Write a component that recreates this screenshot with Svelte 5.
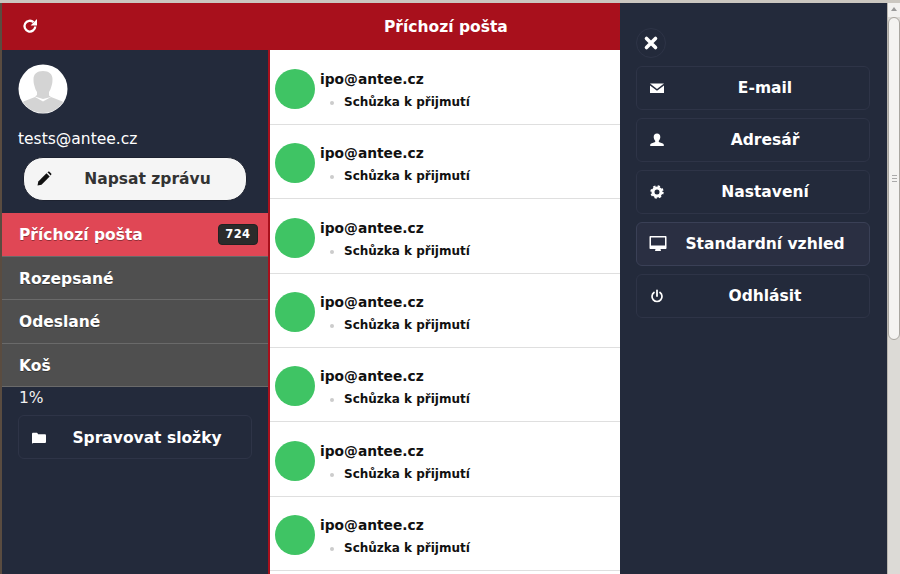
<script>
  const folders = [
    { name: "Příchozí pošta", badge: 724, active: true },
    { name: "Rozepsané" },
    { name: "Odeslané" },
    { name: "Koš" }
  ];
  const messages = Array.from({ length: 7 }, () => ({
    from: "ipo@antee.cz",
    subject: "Schůzka k přijmutí"
  }));
</script>

<div class="frame">
  <div class="page">
    <header class="topbar">
      <svg class="reload" viewBox="0 0 16 16" width="16" height="16">
        <path d="M13.300 8.500A5.400 5.400 0 1 1 11.500 4.100" fill="none" stroke="#fff" stroke-width="2.300" />
        <path d="M15 1v6.400H8.600z" fill="#fff" />
      </svg>
      <h1>Příchozí pošta</h1>
    </header>

    <div class="columns">
      <aside class="sidebar">
        <div class="avatar">
          <svg viewBox="0 0 50 50" width="50" height="50">
            <circle cx="25" cy="25" r="24.500" fill="#fff" />
            <clipPath id="round"><circle cx="25" cy="25" r="24" /></clipPath>
            <g clip-path="url(#round)" fill="#d4d4d4">
              <path d="M15.500 15c0-5 3.500-8 9.500-8s9.500 3 9.500 8c0 3-.3 5-1 7-.6 2.500-1.500 4.500-2.500 6v3.500l2 1.500L25 35l-8-2.500 2-1.500V28c-1-1.500-2-3.500-2.500-6-.7-2-1-4-1-7z" />
              <path d="M3 50v-8c0-3 2-4.500 5-5.500l9-3.500 8 4.500 8-4.500 9 3.500c3 1 5 2.500 5 5.500v8z" />
            </g>
          </svg>
        </div>
        <p class="account">tests@antee.cz</p>
        <button class="compose">
          <svg viewBox="0 0 16 16" width="16" height="16">
            <path d="M1.500 14.500l.8-4L10.500 2.300l3.200 3.200-8.200 8.200z" fill="#111" />
            <path d="M11.500 1.300l.7-.5c.4-.3.900-.3 1.200 0l1.800 1.800c.3.300.3.800 0 1.200l-.5.700z" fill="#111" />
          </svg>
          <span>Napsat zprávu</span>
        </button>

        <nav class="folders">
          {#each folders as f}
            <a class="folder" class:active={f.active} href="#top">
              <span>{f.name}</span>
              {#if f.badge}<span class="badge">{f.badge}</span>{/if}
            </a>
          {/each}
        </nav>
        <p class="quota">1%</p>
        <button class="ghost manage">
          <svg class="ico" viewBox="0 0 16 16" width="16" height="16">
            <path d="M1 4c0-.8.5-1.300 1.200-1.300h3.300c.7 0 1 .3 1.300 1l.3.600h6.700c.7 0 1.200.5 1.200 1.200v6.200c0 .7-.5 1.300-1.200 1.300H2.200C1.500 14 1 13.400 1 12.700z" fill="#fff" />
          </svg>
          <span>Spravovat složky</span>
        </button>
      </aside>

      <main class="list">
        {#each messages as m}
          <article class="message">
            <div class="dot"></div>
            <div class="body">
              <div class="from">{m.from}</div>
              <ul><li>{m.subject}</li></ul>
            </div>
          </article>
        {/each}
      </main>
    </div>

    <aside class="drawer">
      <button class="close" aria-label="Zavřít">
        <svg viewBox="0 0 16 16" width="16" height="16">
          <path d="M3.500 3.500l9 9M12.500 3.500l-9 9" stroke="#fff" stroke-width="3.600" stroke-linecap="round" />
        </svg>
      </button>
      <button class="ghost">
        <svg class="ico" viewBox="0 0 16 16" width="16" height="16">
          <path d="M1 3.500h14L8 9z" fill="#fff" />
          <path d="M1 5.500l7 5.300 7-5.300V13H1z" fill="#fff" />
        </svg>
        <span>E-mail</span>
      </button>
      <button class="ghost">
        <svg class="ico" viewBox="0 0 16 16" width="16" height="16">
          <path d="M8 1.500c2.200 0 3.300 1.500 3.300 3.500 0 1.500-.6 2.800-1.500 3.700v1.300l4 1.500c.7.300 1 .8 1 1.500v1H1.200v-1c0-.7.300-1.200 1-1.500l4-1.500V8.700C5.300 7.800 4.700 6.500 4.700 5c0-2 1.100-3.500 3.300-3.500z" fill="#fff" />
        </svg>
        <span>Adresář</span>
      </button>
      <button class="ghost">
        <svg class="ico" viewBox="0 0 16 16" width="16" height="16">
          <circle cx="8" cy="8" r="4" fill="none" stroke="#fff" stroke-width="3" />
          <circle cx="8" cy="8" r="5.800" fill="none" stroke="#fff" stroke-width="1.800" stroke-dasharray="2.300 2.255" />
        </svg>
        <span>Nastavení</span>
      </button>
      <button class="ghost raised">
        <svg class="ico wide" viewBox="0 0 18 16" width="18" height="16">
          <path d="M1.500 0h15c.6 0 1 .4 1 1v11c0 .6-.4 1-1 1h-5l.5 2H6l.5-2h-5c-.6 0-1-.4-1-1V1c0-.6.4-1 1-1z" fill="#fff" />
          <path d="M2 1.500h14v8H2z" fill="#2a2f42" />
        </svg>
        <span>Standardní vzhled</span>
      </button>
      <button class="ghost">
        <svg class="ico" viewBox="0 0 16 16" width="16" height="16">
          <path d="M5 4.500a5 5 0 1 0 6 0" fill="none" stroke="#fff" stroke-width="1.700" stroke-linecap="round" />
          <path d="M8 2.500v5.500" stroke="#fff" stroke-width="1.800" stroke-linecap="round" />
        </svg>
        <span>Odhlásit</span>
      </button>
    </aside>
  </div>

  <div class="scrollbar">
    <div class="arrow"></div>
    <div class="thumb"><i></i><i></i><i></i></div>
  </div>
</div>

<style>
  :global(body) {
    margin: 0;
    overflow: hidden;
    background: #fff;
  }
  .frame {
    display: flex;
    width: 900px;
    height: 574px;
    box-sizing: border-box;
    border-top: 3px solid #cbc7c0;
    font-family: "DejaVu Sans", sans-serif;
    overflow: hidden;
  }
  .page {
    position: relative;
    flex: 1;
    min-width: 0;
    display: flex;
    flex-direction: column;
    border-left: 2px solid #5a4c40;
    overflow: hidden;
  }
  .topbar {
    flex: 0 0 47px;
    display: flex;
    align-items: center;
    background: #a8101c;
    color: #fff;
  }
  .reload {
    margin: 0 0 2px 20px;
  }
  .topbar h1 {
    margin: 0 0 0 346px;
    font-size: 15.500px;
    font-weight: 700;
  }
  .columns {
    flex: 1;
    display: flex;
    min-height: 0;
  }
  .sidebar {
    flex: 0 0 266px;
    box-sizing: border-box;
    background: #232a3b;
    padding-top: 14px;
    color: #fff;
  }
  .avatar {
    margin-left: 16px;
    height: 50px;
  }
  .account {
    margin: 15px 0 0 16px;
    font-size: 15.500px;
    line-height: 20px;
  }
  .compose {
    display: flex;
    align-items: center;
    width: 224px;
    height: 44px;
    margin: 8px 0 0 21px;
    padding: 0 0 0 12px;
    border: 1px solid #1d2230;
    border-radius: 20px;
    background: #f5f5f5;
    color: #333;
    font: 700 15.500px "DejaVu Sans", sans-serif;
  }
  .compose span {
    flex: 1;
    text-align: center;
    margin-right: 3px;
  }
  .folders {
    margin-top: 12px;
  }
  .folder {
    display: flex;
    align-items: center;
    justify-content: space-between;
    box-sizing: border-box;
    height: 43.500px;
    padding: 2px 10px 0 17px;
    background: #4f4f4f;
    border-bottom: 1px solid #6a6a6a;
    color: #fff;
    font-size: 15.500px;
    font-weight: 700;
    text-decoration: none;
    text-shadow: 0 1px 0 rgba(0, 0, 0, 0.35);
  }
  .folder.active {
    background: #e04755;
  }
  .badge {
    margin-top: -1px;
    padding: 3px 6.500px;
    border: 1px solid #222;
    border-radius: 4px;
    background: #2b2b2b;
    font-size: 11.500px;
    letter-spacing: 0.4px;
    line-height: 13px;
    text-shadow: none;
  }
  .quota {
    margin: 1px 0 0 17px;
    font-size: 15.500px;
    line-height: 20px;
    color: #f0f0f0;
  }
  .ghost {
    display: flex;
    align-items: center;
    box-sizing: border-box;
    width: 234px;
    height: 44px;
    padding: 0 0 0 12px;
    border: 1px solid #2e3447;
    border-radius: 6px;
    background: #232a3b;
    color: #fff;
    font: 700 15.500px "DejaVu Sans", sans-serif;
  }
  .ghost span {
    flex: 1;
    text-align: center;
    margin-left: -4px;
  }
  .ghost .ico {
    flex: none;
  }
  .ghost .wide {
    margin-right: -2px;
  }
  .manage {
    margin: 7px 0 0 16px;
    padding-top: 2px;
    background: transparent;
  }
  .list {
    flex: 0 0 619px;
    padding-top: 0.600px;
    background: #fff;
    border-left: 2px solid #a8101c;
    box-sizing: border-box;
    overflow: hidden;
  }
  .message {
    display: flex;
    box-sizing: border-box;
    height: 74.350px;
    padding: 18.500px 0 0 5px;
    border-bottom: 1px solid #dfdfdf;
    color: #111;
  }
  .dot {
    flex: none;
    width: 40px;
    height: 40px;
    border-radius: 50%;
    background: #3fc464;
  }
  .body {
    margin-left: 5px;
    margin-top: 1px;
  }
  .from {
    font-size: 13.800px;
    font-weight: 700;
    line-height: 18px;
  }
  ul {
    margin: 5px 0 0;
    padding-left: 24px;
    color: #ccc;
  }
  li {
    font-size: 12px;
    font-weight: 700;
    line-height: 18px;
  }
  li::first-line {
    color: #111;
  }
  .drawer {
    position: absolute;
    top: 0;
    right: 0;
    bottom: 0;
    width: 267px;
    box-sizing: border-box;
    background: #232a3b;
    padding: 25px 0 0 16px;
    display: flex;
    flex-direction: column;
    align-items: flex-start;
    gap: 8px;
  }
  .close {
    display: flex;
    align-items: center;
    justify-content: center;
    width: 30px;
    height: 30px;
    padding: 0;
    border: 1px solid #2e3447;
    border-radius: 50%;
    background: transparent;
  }
  .raised {
    background: #2a2f42;
    border-color: #3a4056;
  }
  .scrollbar {
    flex: 0 0 13px;
    display: flex;
    flex-direction: column;
    background: #dcdad6;
    border-left: 1px solid #b9b6b0;
    box-sizing: border-box;
  }
  .arrow {
    height: 14px;
    background: #f2f1ef;
    position: relative;
  }
  .arrow::after {
    content: "";
    position: absolute;
    left: 3px;
    top: 4px;
    border: 3px solid transparent;
    border-top: 0;
    border-bottom: 4px solid #999;
  }
  .thumb {
    height: 323px;
    display: flex;
    flex-direction: column;
    justify-content: center;
    align-items: center;
    gap: 2px;
    background: #f4f3f1;
    border: 1px solid #a9a6a0;
    border-radius: 6px;
    box-sizing: border-box;
  }
  .thumb i {
    width: 5px;
    height: 1px;
    background: #aaa;
  }
</style>
